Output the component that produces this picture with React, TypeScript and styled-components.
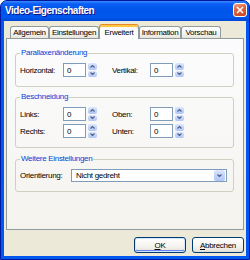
import React from 'react';
import styled, { createGlobalStyle, css } from 'styled-components';

const GlobalStyle = createGlobalStyle`
  html, body {
    margin: 0;
    padding: 0;
    background: #ffffff;
  }
  body {
    font-family: 'Liberation Sans', Arial, sans-serif;
    font-size: 8px;
    letter-spacing: -0.3px;
    color: #000;
  }
`;

const Window = styled.div`
  width: 250px;
  height: 260px;
  box-sizing: border-box;
  display: flex;
  flex-direction: column;
  border: 1px solid #0019a0;
  border-radius: 7px 7px 0 0;
  overflow: hidden;
  background: #0058ee;
`;

const TitleBar = styled.div`
  height: 20px;
  display: flex;
  align-items: center;
  padding: 0 2px 0 4px;
  background: linear-gradient(180deg, #3d8bff 0%, #0a5ff7 14%, #0054e9 45%, #0058ee 80%, #0048d8 100%);
`;

const Title = styled.span`
  flex: 1;
  color: #fff;
  font-size: 10px;
  font-weight: bold;
  letter-spacing: -0.5px;
  text-shadow: 1px 1px #0f1089;
  padding-bottom: 2px;
`;

const CloseButton = styled.div`
  width: 14px;
  height: 14px;
  box-sizing: border-box;
  border: 1px solid #fff;
  border-radius: 3px;
  background: linear-gradient(160deg, #f0a48a 0%, #e2643f 40%, #c8451f 100%);
  display: flex;
  align-items: center;
  justify-content: center;
  margin-top: -2px;
`;

const Frame = styled.div`
  flex: 1;
  display: flex;
  padding: 0 3px 3px;
`;

const Client = styled.div`
  flex: 1;
  display: flex;
  flex-direction: column;
  background: #ece9d8;
  padding: 3px 2px 3px;
`;

const TabStrip = styled.div`
  height: 14px;
  display: flex;
  align-items: flex-end;
  padding-left: 4px;
`;

const activeTab = css`
  height: 15px;
  margin-bottom: -1px;
  background: #fcfcfe;
  border-top: 1px solid #e68b2c;
  box-shadow: inset 0 2px #ffc83c;
  padding-top: 1px;
  position: relative;
  z-index: 1;
`;

const Tab = styled.div<{ $active?: boolean; $width: number }>`
  width: ${p => p.$width}px;
  height: 12px;
  box-sizing: border-box;
  display: flex;
  align-items: center;
  justify-content: center;
  border: 1px solid #919b9c;
  border-bottom: none;
  border-radius: 3px 3px 0 0;
  background: linear-gradient(180deg, #ffffff 0%, #f3f3ef 60%, #e6e4dc 100%);
  white-space: nowrap;

  ${p => p.$active && activeTab}
`;

const Panel = styled.div`
  height: 192px;
  box-sizing: border-box;
  border: 1px solid #919b9c;
  background: linear-gradient(180deg, #fcfcfe 0%, #f4f3ee 100%);
  padding: 9px 9px 0 8px;
  display: flex;
  flex-direction: column;
`;

const Group = styled.fieldset<{ $gap?: number }>`
  margin: ${p => p.$gap ?? 0}px 0 0;
  padding: 5px 4px 9px;
  border: 1px solid #d0d0bf;
  border-radius: 3px;
  min-width: 0;
`;

const Legend = styled.legend`
  color: #0046d5;
  padding: 0 1px;
  line-height: 10px;
`;

const Rows = styled.div`
  display: flex;
  flex-direction: column;
  gap: 3px;
`;

const Row = styled.div`
  display: flex;
  align-items: center;
  gap: 15px;
`;

const Field = styled.div`
  display: flex;
  align-items: center;
`;

const Label = styled.span<{ $width: number }>`
  width: ${p => p.$width}px;
  white-space: nowrap;
`;

const NumberBox = styled.div`
  width: 23px;
  height: 14px;
  box-sizing: border-box;
  border: 1px solid #7f9db9;
  background: #fff;
  display: flex;
  align-items: center;
  padding-left: 3px;
`;

const Spinner = styled.div`
  width: 9px;
  height: 14px;
  margin-left: 2px;
  display: flex;
  flex-direction: column;
  gap: 1px;
`;

const SpinButton = styled.div`
  flex: 1;
  border-radius: 2px;
  background: linear-gradient(180deg, #dde7fd 0%, #c3d4fa 50%, #b2c6f4 100%);
  display: flex;
  align-items: center;
  justify-content: center;
`;

const Combo = styled.div`
  width: 156px;
  height: 13px;
  box-sizing: border-box;
  border: 1px solid #7f9db9;
  background: #fff;
  display: flex;
  align-items: center;
  padding-left: 4px;
`;

const ComboText = styled.span`
  flex: 1;
  white-space: nowrap;
`;

const ComboButton = styled.div`
  width: 11px;
  height: 11px;
  margin-right: 1px;
  border-radius: 2px;
  background: linear-gradient(180deg, #dde7fd 0%, #c3d4fa 50%, #b2c6f4 100%);
  display: flex;
  align-items: center;
  justify-content: center;
`;

const ButtonRow = styled.div`
  margin-top: 7px;
  display: flex;
  justify-content: flex-end;
  gap: 6px;
`;

const Button = styled.div<{ $default?: boolean }>`
  width: 52px;
  height: 16px;
  box-sizing: border-box;
  border: 1px solid #003c74;
  border-radius: 3px;
  background: linear-gradient(180deg, #ffffff 0%, #f4f3ee 60%, #e3e0d6 100%);
  display: flex;
  align-items: center;
  justify-content: center;
  ${p =>
    p.$default &&
    css`
      box-shadow: inset 0 0 0 1px #cee7ff, inset 0 -1px 0 1px #6982ee;
    `}
`;

const Arrow: React.FC<{ up?: boolean }> = ({ up }) => (
  <svg width="5" height="3" viewBox="0 0 5 3">
    <polyline
      points={up ? '0.5,2.5 2.5,0.5 4.5,2.5' : '0.5,0.5 2.5,2.5 4.5,0.5'}
      fill="none"
      stroke="#4d6185"
      strokeWidth="1.2"
    />
  </svg>
);

const SpinField: React.FC<{ label: string; labelWidth: number }> = ({ label, labelWidth }) => (
  <Field>
    <Label $width={labelWidth}>{label}</Label>
    <NumberBox>0</NumberBox>
    <Spinner>
      <SpinButton>
        <Arrow up />
      </SpinButton>
      <SpinButton>
        <Arrow />
      </SpinButton>
    </Spinner>
  </Field>
);

const tabs = [
  { label: 'Allgemein', width: 39 },
  { label: 'Einstellungen', width: 50 },
  { label: 'Erweitert', width: 40, active: true },
  { label: 'Information', width: 42 },
  { label: 'Vorschau', width: 40 },
];

const App: React.FC = () => (
  <>
    <GlobalStyle />
    <Window>
      <TitleBar>
        <Title>Video-Eigenschaften</Title>
        <CloseButton>
          <svg width="8" height="8" viewBox="0 0 8 8">
            <path d="M1 1L7 7M7 1L1 7" stroke="#fff" strokeWidth="1.6" />
          </svg>
        </CloseButton>
      </TitleBar>
      <Frame>
        <Client>
          <TabStrip>
            {tabs.map(t => (
              <Tab key={t.label} $width={t.width} $active={t.active}>
                {t.label}
              </Tab>
            ))}
          </TabStrip>
          <Panel>
            <Group>
              <Legend>Parallaxenänderung</Legend>
              <Row>
                <SpinField label="Horizontal:" labelWidth={43} />
                <SpinField label="Vertikal:" labelWidth={38} />
              </Row>
            </Group>
            <Group $gap={5}>
              <Legend>Beschneidung</Legend>
              <Rows>
                <Row>
                  <SpinField label="Links:" labelWidth={43} />
                  <SpinField label="Oben:" labelWidth={38} />
                </Row>
                <Row>
                  <SpinField label="Rechts:" labelWidth={43} />
                  <SpinField label="Unten:" labelWidth={38} />
                </Row>
              </Rows>
            </Group>
            <Group $gap={6}>
              <Legend>Weitere Einstellungen</Legend>
              <Field>
                <Label $width={51}>Orientierung:</Label>
                <Combo>
                  <ComboText>Nicht gedreht</ComboText>
                  <ComboButton>
                    <Arrow />
                  </ComboButton>
                </Combo>
              </Field>
            </Group>
          </Panel>
          <ButtonRow>
            <Button $default>
              <span>
                <u>O</u>K
              </span>
            </Button>
            <Button>
              <span>
                <u>A</u>bbrechen
              </span>
            </Button>
          </ButtonRow>
        </Client>
      </Frame>
    </Window>
  </>
);

export default App;
